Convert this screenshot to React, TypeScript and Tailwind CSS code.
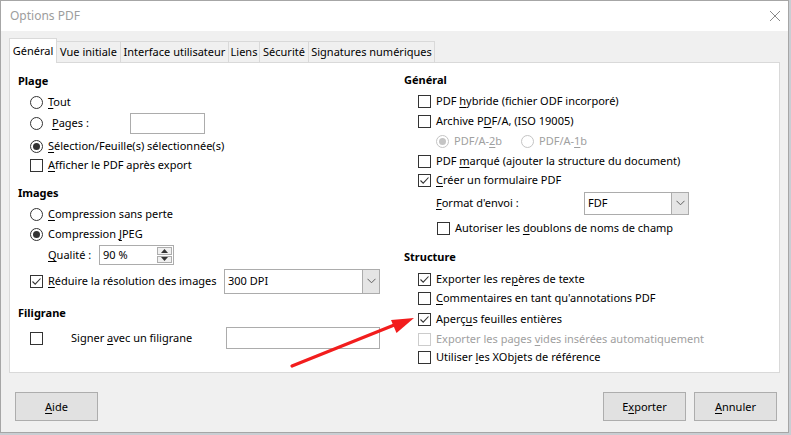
import React from "react";

function Check({ checked = false, disabled = false }: { checked?: boolean; disabled?: boolean }) {
  return (
    <div
      className={
        "w-[13px] h-[13px] shrink-0 border bg-white flex items-center justify-center " +
        (disabled ? "border-[#cccccc]" : "border-[#333333]")
      }
    >
      {checked && (
        <svg width="11" height="11" viewBox="0 0 11 11">
          <polyline points="1.5,5.5 4.2,8.2 9.5,2.5" fill="none" stroke="#333333" strokeWidth="1.1" />
        </svg>
      )}
    </div>
  );
}

function Radio({ checked = false, disabled = false }: { checked?: boolean; disabled?: boolean }) {
  return (
    <div
      className={
        "w-[13px] h-[13px] shrink-0 rounded-full border bg-white flex items-center justify-center " +
        (disabled ? "border-[#c4c4c4]" : "border-[#333333]")
      }
    >
      {checked && (
        <div className={"w-[7px] h-[7px] rounded-full " + (disabled ? "bg-[#c4c4c4]" : "bg-[#333333]")} />
      )}
    </div>
  );
}

function Chevron() {
  return (
    <svg width="9" height="6" viewBox="0 0 9 6">
      <polyline points="0.5,0.8 4.5,4.8 8.5,0.8" fill="none" stroke="#606060" strokeWidth="1" />
    </svg>
  );
}

function Combo({ text, className }: { text: string; className: string }) {
  return (
    <div className={"flex border border-[#acacac] bg-white " + className}>
      <div className="flex-1 flex items-center pl-[3px]">{text}</div>
      <div className="w-[17px] bg-[#e5e5e5] border-l border-[#acacac] flex items-center justify-center">
        <Chevron />
      </div>
    </div>
  );
}

function U({ children }: { children: React.ReactNode }) {
  return <span className="underline underline-offset-[2px]">{children}</span>;
}

function Row({ className = "", children }: { className?: string; children: React.ReactNode }) {
  return <div className={"flex h-[18px] items-center whitespace-nowrap " + className}>{children}</div>;
}

function Heading({ className = "", children }: { className?: string; children: React.ReactNode }) {
  return <div className={"flex h-[18px] items-center font-bold " + className}>{children}</div>;
}

function Tab({ label, className, active = false }: { label: string; className: string; active?: boolean }) {
  return (
    <div
      className={
        "flex items-center justify-center whitespace-nowrap border-t border-l border-r border-[#d9d9d9] " +
        (active ? "bg-white h-[25px] -mb-px relative z-10 " : "bg-[#f0f0f0] h-[21px] -ml-px ") +
        className
      }
    >
      {label}
    </div>
  );
}

export default function App() {
  return (
    <div className="w-[791px] h-[435px] relative overflow-hidden bg-[#c9ced3] font-['Noto_Sans',sans-serif] text-[11px] text-black leading-[18px]">
      <div className="w-[789px] h-[433px] border border-[#a6a6a6] bg-[#f0f0f0] flex flex-col">
        {/* Title bar */}
        <div className="h-[30px] bg-white flex items-center justify-between pl-[9px] pr-[8px]">
          <span className="text-[#9d9d9d] text-[12px]">Options PDF</span>
          <svg width="10" height="10" viewBox="0 0 10 10">
            <line x1="0" y1="0" x2="10" y2="10" stroke="#8a8a8a" strokeWidth="1" />
            <line x1="10" y1="0" x2="0" y2="10" stroke="#8a8a8a" strokeWidth="1" />
          </svg>
        </div>

        {/* Body */}
        <div className="flex flex-col pt-[7px] pl-[8px] pr-[8px]">
          <div className="flex items-end h-[24px]">
            <Tab label="Général" className="w-[48px]" active />
            <Tab label="Vue initiale" className="w-[65px]" />
            <Tab label="Interface utilisateur" className="w-[109px]" />
            <Tab label="Liens" className="w-[32px]" />
            <Tab label="Sécurité" className="w-[50px]" />
            <Tab label="Signatures numériques" className="w-[127px]" />
          </div>

          <div className="w-[771px] h-[311px] border border-[#d9d9d9] bg-white flex">
            {/* Left column */}
            <div className="w-[386px] pl-[8px] pt-[9px] flex flex-col">
              <Heading>Plage</Heading>
              <Row className="mt-[3px] ml-[12px] gap-[5px]">
                <Radio />
                <span>
                  <U>T</U>out
                </span>
              </Row>
              <Row className="mt-[3px] ml-[12px] gap-[5px]">
                <Radio />
                <span className="w-[82px] pl-[4px]">
                  <U>P</U>ages :
                </span>
                <div className="w-[75px] h-[21px] border border-[#acacac] bg-white -ml-[5px]" />
              </Row>
              <Row className="mt-[5px] ml-[12px] gap-[5px]">
                <Radio checked />
                <span>
                  <U>S</U>élection/Feuille(s) sélectionnée(s)
                </span>
              </Row>
              <Row className="mt-[1px] ml-[12px] gap-[5px]">
                <Check />
                <span>
                  <U>A</U>fficher le PDF après export
                </span>
              </Row>

              <Heading className="mt-[10px]">Images</Heading>
              <Row className="mt-[3px] ml-[12px] gap-[5px]">
                <Radio />
                <span>
                  <U>C</U>ompression sans perte
                </span>
              </Row>
              <Row className="mt-[2px] ml-[12px] gap-[5px]">
                <Radio checked />
                <span>
                  Compression <U>J</U>PEG
                </span>
              </Row>
              <Row className="mt-[3px] ml-[30px]">
                <span className="w-[51px]">
                  <U>Q</U>ualité :
                </span>
                <div className="w-[75px] h-[20px] border border-[#acacac] bg-white flex">
                  <div className="flex-1 flex items-center pl-[3px]">90 %</div>
                  <div className="w-[17px] flex flex-col p-px gap-px">
                    <div className="flex-1 border border-[#adadad] bg-[#f0f0f0] flex items-center justify-center">
                      <svg width="7" height="4" viewBox="0 0 7 4">
                        <polygon points="0,4 3.5,0 7,4" fill="#333" />
                      </svg>
                    </div>
                    <div className="flex-1 border border-[#adadad] bg-[#f0f0f0] flex items-center justify-center">
                      <svg width="7" height="4" viewBox="0 0 7 4">
                        <polygon points="0,0 3.5,4 7,0" fill="#333" />
                      </svg>
                    </div>
                  </div>
                </div>
              </Row>
              <Row className="mt-[8px] ml-[12px] gap-[5px]">
                <Check checked />
                <span className="w-[176px]">
                  <U>R</U>éduire la résolution des images
                </span>
                <Combo text="300 DPI" className="w-[156px] h-[25px] -ml-[5px]" />
              </Row>

              <Heading className="mt-[14px]">Filigrane</Heading>
              <Row className="mt-[7px] ml-[12px]">
                <Check />
                <span className="w-[155px] ml-[28px]">
                  Signer <U>a</U>vec un filigrane
                </span>
                <div className="w-[154px] h-[22px] border border-[#acacac] bg-white" />
              </Row>
            </div>

            {/* Right column */}
            <div className="flex-1 pl-[8px] pt-[8px] flex flex-col">
              <Heading>Général</Heading>
              <Row className="mt-[3px] ml-[14px] gap-[5px]">
                <Check />
                <span>
                  PDF <U>h</U>ybride (fichier ODF incorporé)
                </span>
              </Row>
              <Row className="mt-[2px] ml-[14px] gap-[5px]">
                <Check />
                <span>
                  Archive P<U>D</U>F/A, (ISO 19005)
                </span>
              </Row>
              <Row className="mt-[2px] ml-[32px] text-[#a0a0a0]">
                <div className="w-[85px] flex items-center gap-[5px]">
                  <Radio checked disabled />
                  <span>
                    PDF/A-<U>2</U>b
                  </span>
                </div>
                <div className="flex items-center gap-[5px]">
                  <Radio disabled />
                  <span>
                    PDF/A-<U>1</U>b
                  </span>
                </div>
              </Row>
              <Row className="mt-[2px] ml-[14px] gap-[5px]">
                <Check />
                <span>
                  PDF <U>m</U>arqué (ajouter la structure du document)
                </span>
              </Row>
              <Row className="mt-[1px] ml-[14px] gap-[5px]">
                <Check checked />
                <span>
                  <U>C</U>réer un formulaire PDF
                </span>
              </Row>
              <Row className="mt-[5px] ml-[32px]">
                <span className="w-[148px]">
                  <U>F</U>ormat d'envoi :
                </span>
                <Combo text="FDF" className="w-[105px] h-[23px]" />
              </Row>
              <Row className="mt-[7px] ml-[33px] gap-[5px]">
                <Check />
                <span>
                  Autoriser les <U>d</U>oublons de noms de champ
                </span>
              </Row>

              <Heading className="mt-[11px]">Structure</Heading>
              <Row className="mt-[4px] ml-[14px] gap-[5px]">
                <Check checked />
                <span>
                  Exporter les re<U>p</U>ères de texte
                </span>
              </Row>
              <Row className="mt-[1px] ml-[14px] gap-[5px]">
                <Check />
                <span>
                  <U>C</U>ommentaires en tant qu'annotations PDF
                </span>
              </Row>
              <Row className="mt-[3px] ml-[14px] gap-[5px]">
                <Check checked />
                <span>
                  Aperç<U>u</U>s feuilles entières
                </span>
              </Row>
              <Row className="mt-[2px] ml-[14px] gap-[5px] text-[#a0a0a0]">
                <Check disabled />
                <span>
                  Exporter les pages <U>v</U>ides insérées automatiquement
                </span>
              </Row>
              <Row className="mt-[0px] ml-[14px] gap-[5px]">
                <Check />
                <span>
                  Utiliser <U>l</U>es XObjets de référence
                </span>
              </Row>
            </div>
          </div>

          {/* Buttons */}
          <div className="flex items-center mt-[19px] pl-[6px] pr-[3px]">
            <button className="w-[83px] h-[29px] bg-[#e1e1e1] border border-[#adadad]">
              <U>A</U>ide
            </button>
            <div className="flex-1" />
            <button className="w-[83px] h-[29px] bg-[#e1e1e1] border border-[#adadad]">
              E<U>x</U>porter
            </button>
            <button className="w-[83px] h-[29px] bg-[#e1e1e1] border border-[#adadad] ml-[8px]">
              <U>A</U>nnuler
            </button>
          </div>
        </div>
      </div>

      {/* Red annotation arrow */}
      <svg className="absolute left-0 top-0 pointer-events-none" width="791" height="435" viewBox="0 0 791 435">
        <line x1="292" y1="366" x2="398" y2="323.5" stroke="#f21d1d" strokeWidth="3.2" strokeLinecap="round" />
        <polygon points="414,318 391,320 396.5,333" fill="#f21d1d" />
      </svg>
    </div>
  );
}
